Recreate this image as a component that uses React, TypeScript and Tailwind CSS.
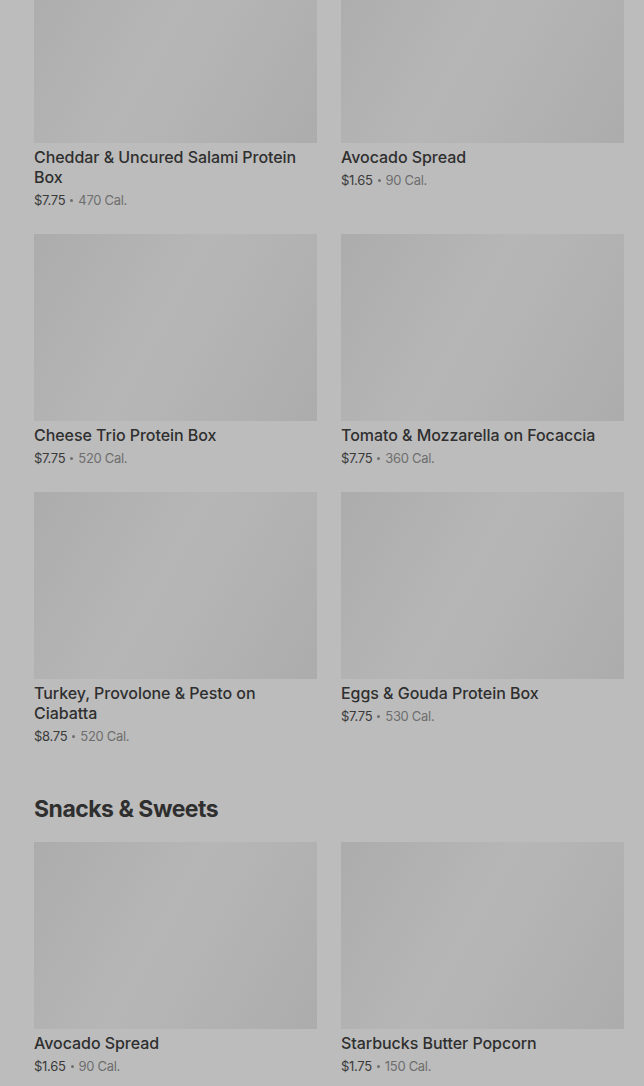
import React from 'react';

interface Item {
  name: string;
  price: string;
  cal: string;
}

const rows: Item[] = [
  { name: 'Cheddar & Uncured Salami Protein Box', price: '$7.75', cal: '470 Cal.' },
  { name: 'Avocado Spread', price: '$1.65', cal: '90 Cal.' },
  { name: 'Cheese Trio Protein Box', price: '$7.75', cal: '520 Cal.' },
  { name: 'Tomato & Mozzarella on Focaccia', price: '$7.75', cal: '360 Cal.' },
  { name: 'Turkey, Provolone & Pesto on Ciabatta', price: '$8.75', cal: '520 Cal.' },
  { name: 'Eggs & Gouda Protein Box', price: '$7.75', cal: '530 Cal.' },
];

const snacks: Item[] = [
  { name: 'Avocado Spread', price: '$1.65', cal: '90 Cal.' },
  { name: 'Starbucks Butter Popcorn', price: '$1.75', cal: '150 Cal.' },
];

const Card: React.FC<{ item: Item }> = ({ item }) => (
  <div className="flex flex-col">
    <div className="h-[187px] w-full bg-[linear-gradient(119deg,#acacac_0%,#b6b6b6_45%,#b4b4b4_60%,#acacac_100%)]" />
    <div className="mt-1 text-[16px] leading-5 font-medium text-[#2f2f2f] tracking-[-0.05px]">{item.name}</div>
    <div className="mt-[3px] flex h-5 items-center gap-[5px] text-[13px] leading-5 text-[#6e6e6e] tracking-[-0.3px]">
      <span className="text-[#3a3a3a]">{item.price}</span>
      <span className="h-[3px] w-[3px] rounded-full bg-[#6e6e6e]" />
      <span>{item.cal}</span>
    </div>
  </div>
);

export default function App() {
  return (
    <div className="min-h-[1086px] w-[644px] overflow-hidden bg-[#bcbcbc] font-['Inter',sans-serif]">
      <div className="-mt-[44px] pl-[34px] pr-[20px]">
        <div className="grid grid-cols-2 gap-x-6 gap-y-6">
          {rows.map((it, i) => (
            <Card key={i} item={it} />
          ))}
        </div>
        <h2 className="mt-[47px] mb-[17px] text-[23px] leading-8 font-bold text-[#2f2f2f] tracking-[-0.5px]">
          Snacks &amp; Sweets
        </h2>
        <div className="grid grid-cols-2 gap-x-6 gap-y-6">
          {snacks.map((it, i) => (
            <Card key={i} item={it} />
          ))}
        </div>
      </div>
    </div>
  );
}
